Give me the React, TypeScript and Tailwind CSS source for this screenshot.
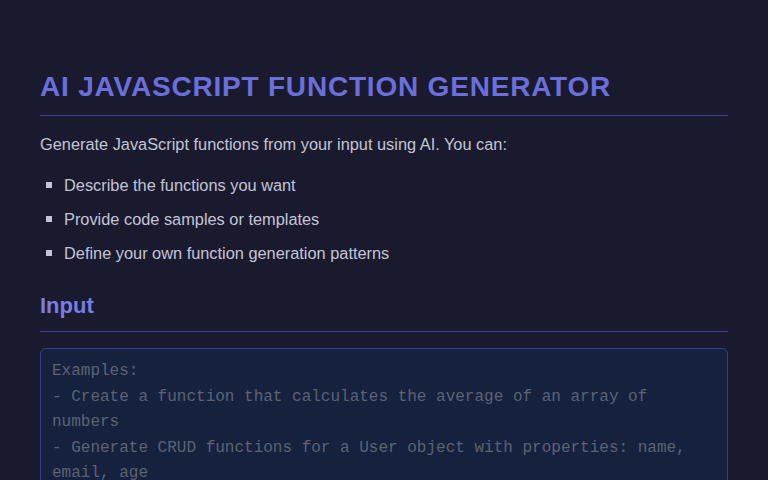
import React, { useState } from 'react';

const features = [
    'Describe the functions you want',
    'Provide code samples or templates',
    'Define your own function generation patterns',
];

const placeholder = `Examples:
- Create a function that calculates the average of an array of numbers
- Generate CRUD functions for a User object with properties: name, email, age`;

export default function App(): React.ReactElement {
    const [prompt, setPrompt] = useState('');

    return (
        <div className="min-h-screen bg-[#1a1a2e] font-['Liberation_Sans',Arial,sans-serif] text-[#c3c5d6]">
            <div className="px-10 pt-[69px] pb-10">
                <h1 className="border-b border-[#3c3f9c] pb-[10px] text-[28px] font-bold uppercase leading-9 tracking-[0.8px] text-[#6b6fdc]">
                    AI JavaScript Function Generator
                </h1>

                <p className="mt-4 text-[16.35px] leading-6">
                    Generate JavaScript functions from your input using AI. You can:
                </p>

                <ul className="mt-[17px] flex flex-col gap-[10px] pl-6">
                    {features.map((item) => (
                        <li key={item} className="relative text-[16.35px] leading-6">
                            <span className="absolute top-[9px] -left-[18px] h-[6px] w-[6px] bg-[#c3c5d6]" />
                            {item}
                        </li>
                    ))}
                </ul>

                <h2 className="mt-[26px] border-b border-[#3c3f9c] pb-[10px] text-[22px] font-bold leading-[30px] text-[#7a7ee2]">
                    Input
                </h2>

                <textarea
                    value={prompt}
                    onChange={(e) => setPrompt(e.target.value)}
                    placeholder={placeholder}
                    rows={6}
                    className="mt-4 block w-full resize-none rounded-md border border-[#363b94] bg-[#16213e] px-[11px] py-[10px] font-['Liberation_Mono','Courier_New',monospace] text-base leading-[25.5px] text-[#c3c5d6] placeholder:text-[#5c6374] focus:outline-none"
                />
            </div>
        </div>
    );
}
